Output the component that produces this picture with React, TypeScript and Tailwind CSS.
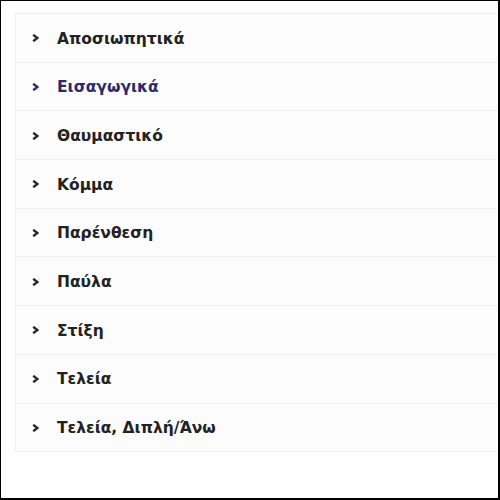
import React from "react";

const items = [
  "Αποσιωπητικά",
  "Εισαγωγικά",
  "Θαυμαστικό",
  "Κόμμα",
  "Παρένθεση",
  "Παύλα",
  "Στίξη",
  "Τελεία",
  "Τελεία, Διπλή/Άνω",
];

const Chevron = () => (
  <svg width="7" height="8" viewBox="0 0 7 8" className="shrink-0 mt-px">
    <path d="M1.2 0.8 L5.4 4 L1.2 7.2" fill="none" stroke="currentColor" strokeWidth="2.4" />
  </svg>
);

export default function App() {
  return (
    <div className="w-[500px] h-[500px] bg-white border-t border-l border-r-2 border-b-2 border-black overflow-hidden">
      <div className="pl-[14px] pt-[12px] pr-px">
        <ul className="border-l border-t border-[#f0f0f0]">
          {items.map((item, i) => (
            <li
              key={item}
              className="flex items-center h-[48.7px] bg-[#fcfcfc] border-b border-[#f0f0f0] pl-[16px] gap-[18px]"
              style={{ fontFamily: '"DejaVu Sans", sans-serif' }}
            >
              <span className={i === 1 ? "text-[#2d2a6b]" : "text-[#2a2a2a]"}>
                <Chevron />
              </span>
              <span
                className={
                  "text-[15.5px] leading-none pt-[3px] font-bold " +
                  (i === 1 ? "text-[#2d2a6b]" : "text-[#222]")
                }
              >
                {item}
              </span>
            </li>
          ))}
        </ul>
      </div>
    </div>
  );
}
